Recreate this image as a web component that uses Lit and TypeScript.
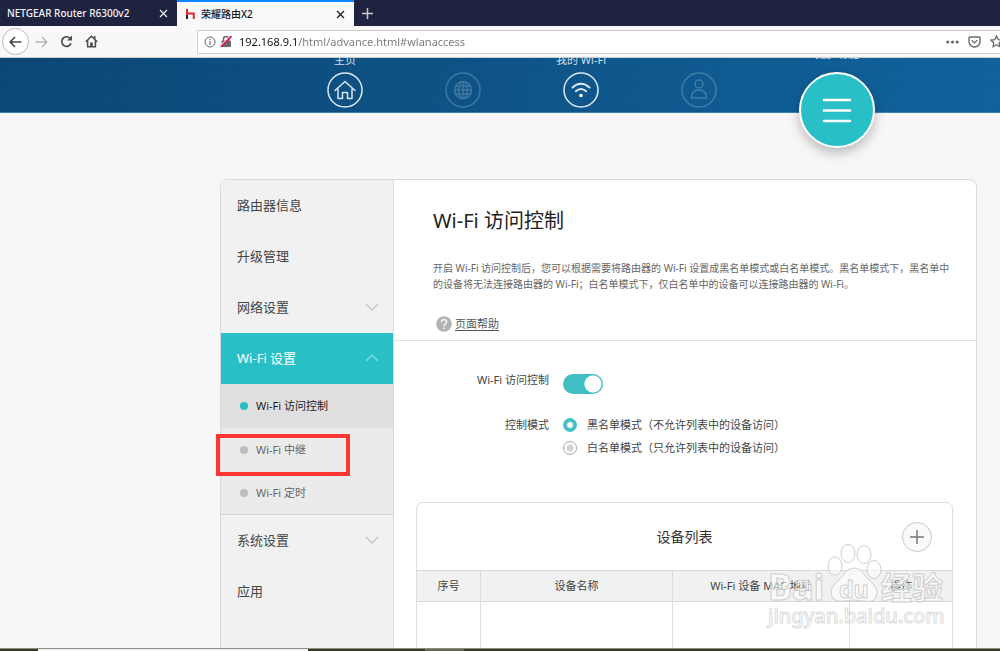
import { LitElement, html, css, svg, nothing } from "lit";
import { customElement, state } from "lit/decorators.js";

const chevron = (up: boolean) => html`<svg class="chevron" viewBox="0 0 14 8" width="14" height="8" aria-hidden="true">
  <path d=${up ? "M1 7 7 1l6 6" : "M1 1l6 6 6-6"} fill="none" stroke="currentColor" stroke-width="1.2" />
</svg>`;

@customElement("browser-chrome")
class BrowserChrome extends LitElement {
  static styles = css`
    :host { display: block; flex: none; font: 10px/16px "Noto Sans", "Noto Sans CJK SC", sans-serif; }
    button { border: 0; padding: 0; background: none; color: inherit; font: inherit; display: flex; align-items: center; justify-content: center; }
    .tabs { display: flex; height: 26px; background: #20233f; color: #f3f3f6; }
    .tab { display: flex; align-items: center; width: 177px; box-sizing: border-box; padding: 0 9px 0 7px; font-weight: 500; }
    .tab .name { flex: 1; }
    .tab.active { background: #f9f9fb; color: #18181c; border-top: 2px solid #0a84ff; padding-left: 8px; }
    .tab .logo { margin-right: 5px; }
    .new { width: 26px; color: #c8c9d2; }
    .bar { display: flex; align-items: center; height: 32px; box-sizing: border-box; background: #f8f8f9; border-bottom: 1px solid #ccc; padding-left: 2px; color: #4a4a4e; }
    .back { width: 27px; height: 27px; box-sizing: border-box; border: 1px solid #bbb; border-radius: 50%; background: #fff; }
    .tool { width: 25px; height: 26px; }
    .tool.off { color: #b5b5b7; }
    .address { display: flex; align-items: center; flex: 1; height: 24px; box-sizing: border-box; margin-left: 93px; border: 1px solid #ccc; border-right: 0; border-radius: 2px 0 0 2px; background: #fff; padding-left: 6px; gap: 4px; overflow: hidden; color: #69696d; }
    .address input { flex: 1; min-width: 0; border: 0; outline: 0; padding: 0 0 0 3px; height: 20px; font: 11px/20px "Noto Sans", sans-serif; color: transparent; background: linear-gradient(90deg, #111 62px, #77777a 62px); -webkit-background-clip: text; background-clip: text; }
    .actions { display: flex; flex: none; gap: 9px; width: 54px; align-items: center; }
    .actions button, .actions svg { flex: none; }
  `;

  render() {
    const close = html`<button aria-label="关闭"><svg width="9" height="9" viewBox="0 0 9 9"><path d="M1 1l7 7M8 1 1 8" stroke="currentColor" stroke-width="1.2"/></svg></button>`;
    return html`
      <div class="tabs">
        <div class="tab"><span class="name">NETGEAR Router R6300v2</span>${close}</div>
        <div class="tab active">
          <svg class="logo" width="11" height="12" viewBox="0 0 11 12"><path d="M2 1v4.6h6.8V11" fill="none" stroke="#e5222d" stroke-width="2"/><path d="M2 6.500V11" stroke="#222" stroke-width="2"/></svg>
          <span class="name">荣耀路由X2</span>${close}
        </div>
        <button class="new" aria-label="新标签"><svg width="11" height="11" viewBox="0 0 11 11"><path d="M5.500 0v11M0 5.500h11" stroke="currentColor" stroke-width="1.500"/></svg></button>
      </div>
      <div class="bar">
        <button class="back" aria-label="后退"><svg width="13" height="12" viewBox="0 0 13 12"><path d="M12.500 6H1.500M6 1 1.200 6 6 11" fill="none" stroke="currentColor" stroke-width="1.700"/></svg></button>
        <button class="tool off" aria-label="前进"><svg width="13" height="12" viewBox="0 0 13 12"><path d="M.5 6h11M7 1l4.800 5L7 11" fill="none" stroke="currentColor" stroke-width="1.400"/></svg></button>
        <button class="tool" aria-label="刷新"><svg width="13" height="13" viewBox="0 0 13 13"><path d="M10 3.200A4.800 4.800 0 1 0 11 8.400" fill="none" stroke="currentColor" stroke-width="1.700"/><path d="M12 .5v5H7z" fill="currentColor"/></svg></button>
        <button class="tool" aria-label="主页"><svg width="13" height="13" viewBox="0 0 13 13"><path d="M.8 6.800 6.500 1.200l5.700 5.600M2.600 5.500v6.300h7.800V5.500" fill="none" stroke="currentColor" stroke-width="1.500"/><path d="M5.200 7.500h2.600V12H5.200zM9 1h1.500v3L9 2.700z" fill="currentColor"/></svg></button>
        <div class="address">
          <svg width="12" height="12" viewBox="0 0 12 12"><circle cx="6" cy="6" r="5" fill="none" stroke="currentColor"/><path d="M6 5v4M6 2.800v1.300" stroke="currentColor" stroke-width="1.200"/></svg>
          <svg width="12" height="13" viewBox="0 0 12 13"><path d="M3.500 6V4a2.500 2.500 0 0 1 5 0v2" fill="none" stroke="currentColor" stroke-width="1.500"/><rect x="1.500" y="5.500" width="9.500" height="6.500" rx="1" fill="currentColor"/><path d="M.5 11 10.500 1" stroke="#fff" stroke-width="1.200"/><path d="M.8 12 11.500 1.200" stroke="#e8123c" stroke-width="1.700"/></svg>
          <input aria-label="地址" value="192.168.9.1/html/advance.html#wlanaccess" />
          <div class="actions">
            <button aria-label="更多"><svg width="13" height="4" viewBox="0 0 13 4"><g fill="currentColor"><circle cx="1.800" cy="2" r="1.600"/><circle cx="6.500" cy="2" r="1.600"/><circle cx="11.200" cy="2" r="1.600"/></g></svg></button>
            <button aria-label="收藏"><svg width="13" height="12" viewBox="0 0 13 12"><path d="M1.700 1h9.600q.7 0 .7.700v3.800a5.500 5.500 0 0 1-11 0V1.700Q1 1 1.700 1z" fill="none" stroke="currentColor" stroke-width="1.400"/><path d="M3.800 4.300l2.700 2.600 2.700-2.600" fill="none" stroke="currentColor" stroke-width="1.400"/></svg></button>
            <button aria-label="书签"><svg width="13" height="13" viewBox="0 0 13 13"><path d="M6.500 1l1.700 3.600 3.900.5-2.900 2.700.7 3.900-3.400-1.900-3.400 1.900.7-3.900L.9 5.100l3.900-.5z" fill="none" stroke="currentColor" stroke-width="1.300"/></svg></button>
          </div>
        </div>
      </div>`;
  }
}

@customElement("router-header")
class RouterHeader extends LitElement {
  static styles = css`
    :host { display: block; flex: none; position: relative; z-index: 1; height: 55px; box-sizing: border-box; font: 11px/16px "Noto Sans", "Noto Sans CJK SC", sans-serif;
      background: radial-gradient(circle, rgba(0, 40, 70, .07) 1px, transparent 1px) 0 0 / 5px 5px, linear-gradient(100deg, #0d4776, #0e5488 50%, #11639d); border-bottom: 1px solid #3f7fae; }
    nav { display: flex; padding-left: 286px; color: #cfe0ec; }
    a { display: flex; flex-direction: column; align-items: center; gap: 4px; width: 118px; margin-top: -6px; color: inherit; text-decoration: none; }
    .label { height: 16px; white-space: nowrap; }
    .menu { width: 158px; margin-top: -12px; gap: 10px; }
    .off svg { opacity: .24; }
    .round { display: flex; align-items: center; justify-content: center; width: 76px; height: 76px; box-sizing: border-box; border: 2px solid #fff; border-radius: 50%; background: #29bfc7; box-shadow: 0 5px 12px rgba(0, 0, 0, .25); }
  `;

  render() {
    const ring = (body: unknown) => html`<svg width="36" height="36" viewBox="0 0 36 36" fill="none" stroke="#dce8f1" stroke-width="1.500"><circle cx="18" cy="18" r="17"/>${body}</svg>`;
    return html`<nav>
      <a href="#home"><span class="label">主页</span>${ring(svg`<path d="M8 18.500 18 9.500l10 9M11 17v9.500h4.500v-6h5v6H25V17" stroke-linejoin="round" stroke-linecap="round"/>`)}</a>
      <a href="#internet" class="off" aria-label="上网"><span class="label"></span>${ring(svg`<circle cx="18" cy="18" r="8.500"/><ellipse cx="18" cy="18" rx="4.300" ry="8.500"/><path d="M18 9.500v17M9.500 18h17M11 14h14M11 22h14"/>`)}</a>
      <a href="#wifi"><span class="label">我的 Wi-Fi</span>${ring(svg`<path d="M9.500 15.500q8.500-7.500 17 0M12.800 19.200q5.200-4.600 10.400 0" stroke-width="1.900" stroke-linecap="round"/><circle cx="18" cy="23.500" r="1.800" fill="#fff" stroke="none"/>`)}</a>
      <a href="#devices" class="off" aria-label="终端管理"><span class="label"></span>${ring(svg`<circle cx="18" cy="12" r="4"/><path d="M10.500 26q0-8 7.500-8t7.500 8z" stroke-linejoin="round"/>`)}</a>
      <a href="#more" class="menu"><span class="label">更多功能</span>
        <span class="round"><svg width="30" height="26" viewBox="0 0 30 26"><path d="M2 3h26M2 13.500h26M2 24h26" stroke="#fff" stroke-width="2.400" stroke-linecap="round"/></svg></span>
      </a>
    </nav>`;
  }
}

@customElement("side-menu")
class SideMenu extends LitElement {
  static styles = css`
    :host { display: block; flex: none; width: 173px; box-sizing: border-box; border-right: 1px solid #dadada; border-radius: 7px 0 0 0; background: #f1f1f1; font: 13px/20px "Noto Sans", "Noto Sans CJK SC", sans-serif; }
    ul { list-style: none; margin: 0; padding: 0; }
    a { display: flex; align-items: center; justify-content: space-between; height: 51px; box-sizing: border-box; padding: 0 14px 2px 16px; color: #444; text-decoration: none; }
    .chevron { color: #c2c2c2; }
    .open { background: #29bfc7; color: #fff; }
    .open .chevron { color: #8fdfe3; }
    .sub { background: #ebebeb; border-bottom: 1px solid #d4d4d4; height: 130px; }
    .sub li { position: relative; }
    .sub a { height: 43px; padding-bottom: 0; font-size: 11px; justify-content: flex-start; gap: 8px; padding-left: 19px; color: #666; }
    .sub a::before { content: ""; width: 8px; height: 8px; border-radius: 50%; background: #bdbdbd; }
    .sub a.current { height: 44px; background: #dfdfdf; color: #1c1c1c; }
    .sub a.current::before { background: #29bfc7; }
    .mark { position: absolute; left: -5px; top: 6px; width: 134px; height: 42px; box-sizing: border-box; border: 4px solid #ff3636; pointer-events: none; z-index: 1; }
  `;

  render() {
    const sub = ["Wi-Fi 访问控制", "Wi-Fi 中继", "Wi-Fi 定时"];
    return html`<ul>
      <li><a href="#info">路由器信息</a></li>
      <li><a href="#upgrade">升级管理</a></li>
      <li><a href="#network">网络设置${chevron(false)}</a></li>
      <li>
        <a class="open" href="#wlan">Wi-Fi 设置${chevron(true)}</a>
        <ul class="sub">${sub.map((t, i) => html`<li><a href="#wlan${i}" class=${i === 0 ? "current" : ""}>${t}</a>${i === 1 ? html`<span class="mark"></span>` : nothing}</li>`)}</ul>
      </li>
      <li><a href="#system">系统设置${chevron(false)}</a></li>
      <li><a href="#apps">应用</a></li>
    </ul>`;
  }
}

@customElement("access-panel")
class AccessPanel extends LitElement {
  @state() enabled = true;

  static styles = css`
    :host { display: block; flex: 1; min-width: 0; font: 11px/20px "Noto Sans", "Noto Sans CJK SC", sans-serif; color: #444; }
    .intro { display: flex; flex-direction: column; align-items: flex-start; padding: 25px 24px 8px 39px; border-bottom: 1px solid #e2e2e2; }
    h1 { margin: 0 0 23px; font-size: 20px; line-height: 32px; font-weight: 400; color: #222; }
    p { margin: 0 0 24px; font-size: 10px; line-height: 16px; color: #666; }
    .help { display: inline-flex; align-items: center; gap: 3px; margin-left: 3px; height: 16px; color: #555; text-underline-offset: 2px; }
    form { display: grid; grid-template-columns: 155px 1fr; column-gap: 14px; row-gap: 21px; padding-top: 29px; }
    .name { text-align: right; }
    .switch { appearance: none; display: block; width: 40px; height: 20px; margin: 4px 0 0; border-radius: 10px; background: radial-gradient(circle at 30px 10px, #fff 8px, transparent 9px) #41bfc4; }
    .switch:not(:checked) { background: radial-gradient(circle at 10px 10px, #fff 8px, transparent 9px) #bbb; }
    .modes { display: grid; gap: 3px; }
    .modes label { display: flex; align-items: center; gap: 10px; white-space: nowrap; }
    .modes input { appearance: none; width: 14px; height: 14px; margin: 0; border-radius: 50%; border: 1px solid #aaa; background: radial-gradient(circle, #d2d2d2 3px, transparent 4px); }
    .modes input:checked { border-color: #41bfc4; background: radial-gradient(circle, #fff 2px, #41bfc4 4px); }
    .list { margin: 44px 23px 0 22px; border: 1px solid #dcdcdc; border-radius: 7px 7px 0 0; display: flex; flex-direction: column; }
    .head { display: grid; grid-template-columns: 1fr auto 1fr; align-items: center; height: 67px; padding: 0 20px; }
    h2 { grid-column: 2; margin: 0; font-size: 14px; font-weight: 400; color: #333; }
    .add { justify-self: end; width: 30px; height: 30px; padding: 0; display: flex; align-items: center; justify-content: center; border: 1px solid #c8c8c8; border-radius: 50%; background: #fafafa; }
    table { width: 100%; border-collapse: collapse; table-layout: fixed; }
    th { height: 30px; padding: 0; background: #f1f1f1; border: 1px solid #d8d8d8; border-width: 1px 0; font-weight: 400; }
    td { padding: 0; height: 140px; }
    th + th, td + td { border-left: 1px solid #dcdcdc; }
    .no { width: 63px; } .dev { width: 191px; } .mac { width: 176px; }
  `;

  render() {
    return html`
      <section class="intro">
        <h1>Wi-Fi 访问控制</h1>
        <p>开启 Wi-Fi 访问控制后，您可以根据需要将路由器的 Wi-Fi 设置成黑名单模式或白名单模式。黑名单模式下，黑名单中<br>的设备将无法连接路由器的 Wi-Fi；白名单模式下，仅白名单中的设备可以连接路由器的 Wi-Fi。</p>
        <a class="help" href="#help"><svg width="16" height="16" viewBox="0 0 16 16"><circle cx="8" cy="8" r="7.800" fill="#b3b3b3"/><path d="M5.400 6.200q0-2.500 2.600-2.500t2.600 2.300q0 1.200-1.400 2T8 10M8 11.300v1.600" fill="none" stroke="#fff" stroke-width="1.300"/></svg>页面帮助</a>
      </section>
      <form>
        <label class="name" for="acl">Wi-Fi 访问控制</label>
        <input id="acl" class="switch" type="checkbox" role="switch" .checked=${this.enabled} @change=${(e: Event) => (this.enabled = (e.target as HTMLInputElement).checked)} />
        <span class="name" id="mode">控制模式</span>
        <div class="modes" role="radiogroup" aria-labelledby="mode">
          <label><input type="radio" name="mode" checked />黑名单模式（不允许列表中的设备访问）</label>
          <label><input type="radio" name="mode" />白名单模式（只允许列表中的设备访问）</label>
        </div>
      </form>
      <section class="list">
        <div class="head"><h2>设备列表</h2><button class="add" aria-label="添加"><svg width="14" height="14" viewBox="0 0 14 14"><path d="M7 0v14M0 7h14" stroke="#777" stroke-width="1.500"/></svg></button></div>
        <table>
          <thead><tr><th class="no">序号</th><th class="dev">设备名称</th><th class="mac">Wi-Fi 设备 MAC 地址</th><th>操作</th></tr></thead>
          <tbody><tr><td></td><td></td><td></td><td></td></tr></tbody>
        </table>
      </section>`;
  }
}

@customElement("site-watermark")
class SiteWatermark extends LitElement {
  static styles = css`
    :host { position: absolute; right: 48px; bottom: 18px; z-index: 2; pointer-events: none; }
    svg { display: block; }
    text, .shape { fill: rgba(255, 255, 255, .6); stroke: #cfcfcf; stroke-width: 1px; font-family: "Noto Sans", "Noto Sans CJK SC", sans-serif; }
    .big { font-size: 36px; font-weight: 700; }
    .cjk { font-size: 31px; font-weight: 700; }
    .du { font-size: 23px; font-weight: 700; }
    .url { font-size: 20px; font-weight: 500; stroke: #dcdcdc; }
  `;

  render() {
    return html`<svg width="186" height="90" viewBox="0 0 186 90">
      <g class="shape"><ellipse cx="69" cy="23" rx="7" ry="9"/><ellipse cx="82" cy="10.500" rx="7" ry="9"/><ellipse cx="98" cy="11.500" rx="7" ry="9"/><ellipse cx="108" cy="26.500" rx="7" ry="9"/>
      <path d="M88 25q7 0 12 9 11 9 11 15 0 12-14 9-9-2-18 0-14 2-14-9 0-6 11-15 5-9 12-9z"/></g>
      <text class="big" x="2" y="57">Bai</text><text class="du" x="73" y="55">du</text><text class="cjk" x="115" y="56">经验</text>
      <text class="url" x="2" y="80">jingyan.baidu.com</text>
    </svg>`;
  }
}

@customElement("app-root")
class AppRoot extends LitElement {
  static styles = css`
    :host { position: relative; display: flex; flex-direction: column; height: 100vh; overflow: hidden; background: #f7f7f7; }
    .page { flex: 1; min-height: 0; overflow: hidden; display: flex; flex-direction: column; }
    .card { display: flex; flex: none; margin: 66px 23px 0 220px; border: 1px solid #dadada; border-radius: 8px 8px 0 0; background: #fff; }
    .taskbar { flex: none; display: flex; height: 2px; background: #383b27; border-top: 1px solid #8d8f84; }
    .lead { width: 38px; }
    .field { width: 270px; background: #f3f3f3; }
    .item { width: 39px; margin-left: 117px; background: #666955; }
  `;

  render() {
    return html`
      <browser-chrome></browser-chrome>
      <div class="page">
        <router-header></router-header>
        <main class="card"><side-menu></side-menu><access-panel></access-panel></main>
      </div>
      <site-watermark></site-watermark>
      <div class="taskbar"><span class="lead"></span><span class="field"></span><span class="item"></span></div>`;
  }
}
